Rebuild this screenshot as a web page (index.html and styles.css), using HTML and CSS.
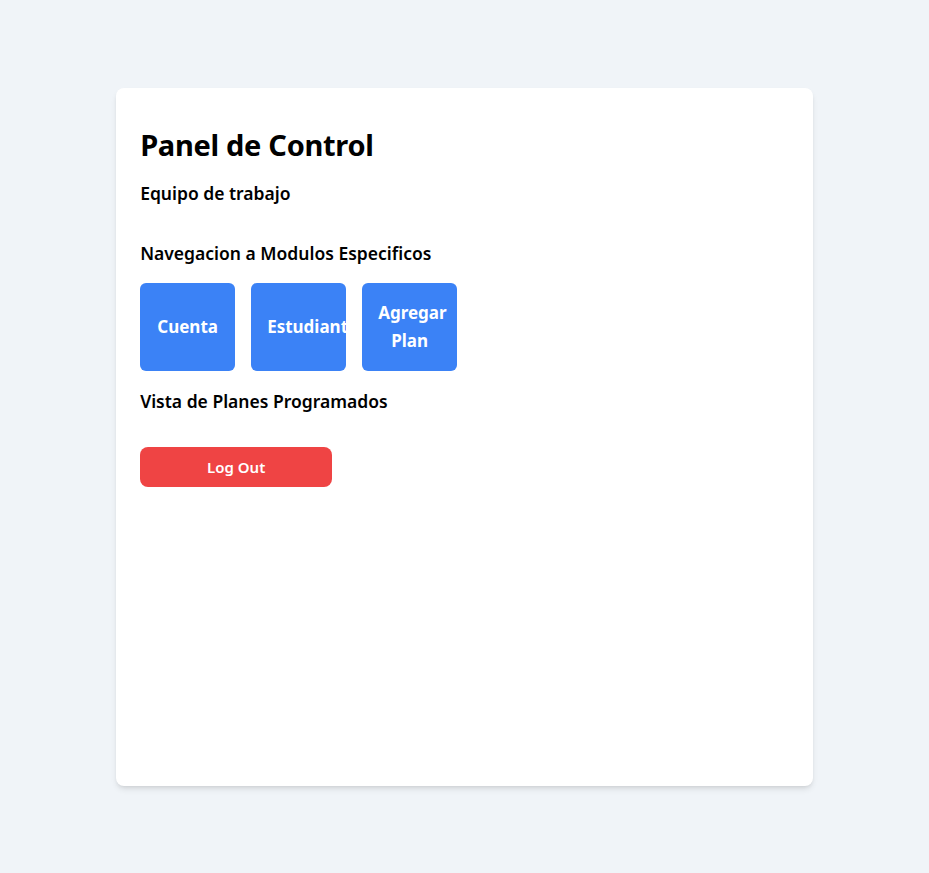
FILE: index.html
```html
<!DOCTYPE html>
<html lang="es">
<head>
<meta charset="utf-8">
<title>Panel de Control</title>
<link rel="stylesheet" href="styles.css">
</head>
<body>
<main class="page">
  <section class="card">
    <h1 class="title">Panel de Control</h1>
    <h2 class="subtitle team">Equipo de trabajo</h2>
    <h2 class="subtitle nav-title">Navegacion a Modulos Especificos</h2>
    <div class="modules">
      <button class="module">Cuenta</button>
      <button class="module">Estudiantes</button>
      <button class="module">Agregar Plan</button>
    </div>
    <h2 class="subtitle plans">Vista de Planes Programados</h2>
    <button class="logout">Log Out</button>
  </section>
</main>
</body>
</html>
```

FILE: styles.css
```css
* { box-sizing: border-box; }
html, body { margin: 0; padding: 0; }
body {
  background: #f0f4f8;
  font-family: "Noto Sans", "Open Sans", sans-serif;
  color: #000;
}
.page {
  min-height: 873px;
  display: flex;
  align-items: center;
  justify-content: center;
}
.card {
  width: 75%;
  height: 698px;
  background: #fff;
  border-radius: 8px;
  box-shadow: 0 4px 6px -1px rgba(0,0,0,0.1), 0 2px 4px -2px rgba(0,0,0,0.1);
  padding: 39px 24px 24px;
  display: flex;
  flex-direction: column;
  align-items: flex-start;
}
.title {
  margin: 0 0 16px;
  font-size: 29px;
  line-height: 36px;
  font-weight: 700;
  letter-spacing: -0.3px;
}
.subtitle {
  margin: 0;
  font-size: 17.5px;
  line-height: 28px;
  font-weight: 600;
}
.team { margin-bottom: 32px; }
.nav-title { margin-bottom: 16px; }
.modules {
  display: flex;
  gap: 16px;
  margin-bottom: 16px;
}
.module {
  width: 95px;
  padding: 16px;
  background: #3b82f6;
  color: #fff;
  border: none;
  border-radius: 6px;
  font-family: inherit;
  font-size: 17px;
  line-height: 28px;
  font-weight: 700;
  text-align: center;
  overflow: hidden;
  white-space: normal;
}
.plans { margin-bottom: 32px; }
.logout {
  width: 192px;
  height: 40px;
  background: #ef4444;
  color: #fff;
  border: none;
  border-radius: 8px;
  font-family: inherit;
  font-size: 15px;
  font-weight: 600;
}
```
